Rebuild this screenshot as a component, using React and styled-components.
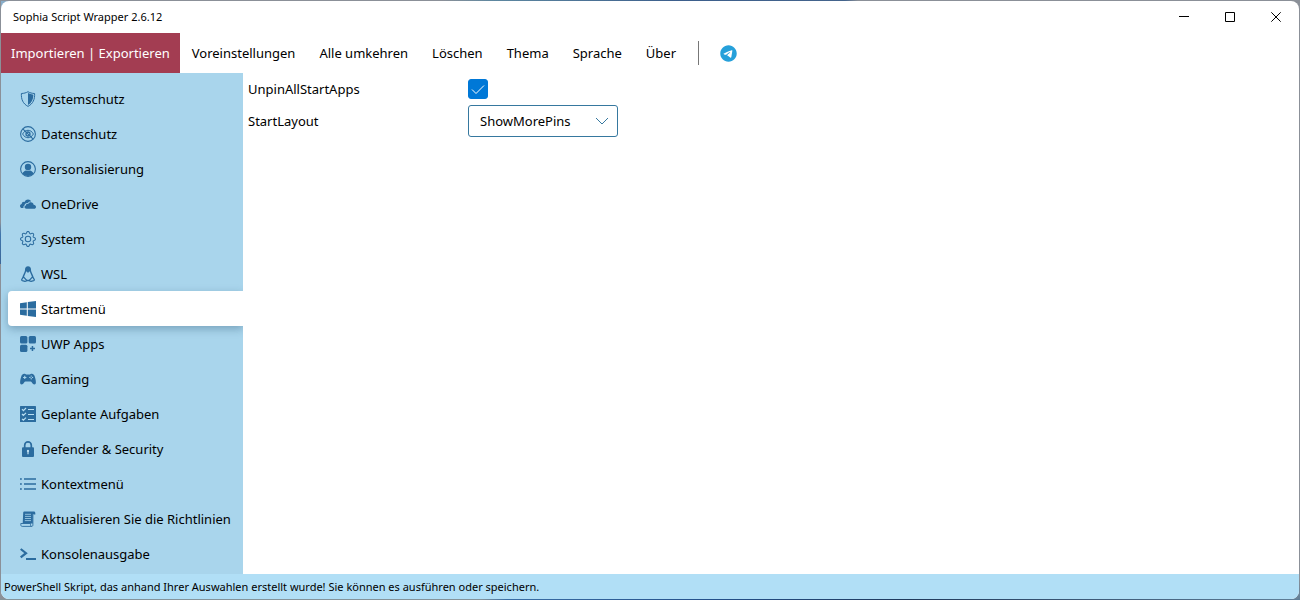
import React, { useState } from "react";
import styled, { createGlobalStyle } from "styled-components";
import { BsGear } from "react-icons/bs";
import { FaTelegram } from "react-icons/fa6";

const GlobalStyle = createGlobalStyle`
  *, *::before, *::after { box-sizing: border-box; }
  body {
    margin: 0;
    background: #8b9098;
    color: #000;
    font-family: "Noto Sans", "Open Sans", sans-serif;
    font-size: 13px;
    line-height: 20px;
  }
  button, select { font: inherit; color: inherit; }
`;

const Desktop = styled.div`
  height: 100vh;
  padding: 1px;
  background:
    linear-gradient(90deg, #8b9098 34%, #5d87a0 38%, #3c5f8c 52%, #44648c 65%, #8b9098 66%) top / 100% 1px no-repeat,
    linear-gradient(90deg, #84939a 37%, #3a6ea5 39%, #24508a 55%, #203a5c 70%, #5f7f98 100%) bottom / 100% 1px no-repeat,
    linear-gradient(#8b9098 37%, #3f76ad 39%, #3c6798 44%, #8b9098 44%) left / 1px 100% no-repeat,
    linear-gradient(135deg, #86b4d6 0, #8b9098 16px, #8b9098 calc(100% - 16px), #5f7f98 100%);
`;

const Window = styled.div`
  height: 100%;
  display: flex;
  flex-direction: column;
  background: #fff;
  border-radius: 8px;
  overflow: hidden;
`;

const TitleBar = styled.header`
  flex: none;
  height: 32px;
  display: flex;
  align-items: center;
  justify-content: space-between;
  padding-left: 12px;
`;

const Title = styled.h1`
  margin: 0;
  font-size: 11px;
  font-weight: 400;
  line-height: 16px;
`;

const WindowButtons = styled.div`
  display: flex;
`;

const WindowButton = styled.button`
  width: 46px;
  height: 32px;
  display: grid;
  place-items: center;
  padding: 0;
  border: 0;
  background: none;
  svg { width: 10px; height: 10px; fill: none; stroke: #000; }
`;

const MenuBar = styled.nav`
  flex: none;
  height: 40px;
  display: flex;
  align-items: center;
`;

const MenuButton = styled.button`
  height: 40px;
  padding: 0 ${(p) => (p.$active ? "10px" : "12px")};
  border: 0;
  white-space: nowrap;
  background: ${(p) => (p.$active ? "#a33d52" : "none")};
  color: ${(p) => (p.$active ? "#fff" : "#000")};
`;

const Divider = styled.span`
  width: 1px;
  height: 24px;
  margin: 0 21px 0 10px;
  background: #777;
`;

const TelegramLink = styled.a`
  display: flex;
  color: #26a0da;
  svg { width: 17px; height: 17px; }
`;

const Body = styled.div`
  flex: 1;
  min-height: 0;
  display: flex;
`;

const Sidebar = styled.aside`
  flex: none;
  width: 242px;
  padding: 8px 0 0 7px;
  overflow: hidden;
  background: #a9d5ec;
`;

const SideButton = styled.button`
  width: 100%;
  height: 35px;
  display: flex;
  align-items: center;
  gap: 5px;
  padding: 0 0 0 12px;
  border: 0;
  border-radius: 4px 0 0 4px;
  text-align: left;
  white-space: nowrap;
  background: ${(p) => (p.$selected ? "#fff" : "none")};
  box-shadow: ${(p) => (p.$selected ? "0 3px 8px rgba(30, 70, 100, 0.35)" : "none")};
  svg { flex: none; width: 16px; height: 16px; color: #2b6c9f; }
`;

const Content = styled.main`
  flex: 1;
  padding-left: 5px;
`;

const SettingRow = styled.div`
  height: 32px;
  display: grid;
  grid-template-columns: 220px auto;
  justify-content: start;
  align-items: center;
`;

const Overlay = styled.span`
  display: grid;
  align-items: center;
  > * { grid-area: 1 / 1; }
  > svg { pointer-events: none; fill: none; }
`;

const CheckBox = styled.input`
  appearance: none;
  width: 20px;
  height: 20px;
  margin: 0;
  border: 1px solid #0078d7;
  border-radius: 3px;
  background: #fff;
  &:checked { background: #0078d7; }
`;

const CheckMark = styled.svg`
  width: 20px;
  height: 20px;
  stroke: #fff;
`;

const Select = styled.select`
  appearance: none;
  width: 150px;
  height: 32px;
  padding: 0 32px 0 11px;
  border: 1px solid #36789f;
  border-radius: 3px;
  background: #fff;
`;

const Chevron = styled.svg`
  width: 14px;
  height: 8px;
  margin-right: 9px;
  justify-self: end;
  stroke: #36789f;
`;

const StatusBar = styled.footer`
  flex: none;
  height: 25px;
  padding: 0 3px;
  font-size: 11px;
  line-height: 25px;
  background: #b1dff6;
`;

const ShieldIcon = () => (
  <svg viewBox="0 0 16 16" fill="none" stroke="currentColor">
    <path d="M8 .7C6.200 1.800 4 2.400 1.400 2.500c-.3 5.800 1.500 10.200 6.600 12.900 5.100-2.700 6.900-7.100 6.600-12.900C12 2.400 9.800 1.800 8 .7Z" />
    <path d="M8 2c1.600.9 3.400 1.500 5.400 1.700-.1 4.700-1.700 8.100-5.400 10.400Z" fill="currentColor" stroke="none" />
  </svg>
);

const EyeOffIcon = () => (
  <svg viewBox="0 0 16 16" fill="none" stroke="currentColor">
    <circle cx="8" cy="8" r="7.400" strokeWidth="1.100" />
    <path d="M2.600 8C4 5.400 5.900 4.300 8 4.300s4 1.100 5.400 3.700C12 10.600 10.100 11.700 8 11.700S4 10.600 2.600 8Z" strokeWidth="1" />
    <circle cx="8" cy="8" r="2" strokeWidth="1.300" />
    <path d="m2.800 2.800 10.400 10.400" strokeWidth="1.100" />
  </svg>
);

const PersonIcon = () => (
  <svg viewBox="0 0 16 16" fill="currentColor">
    <circle cx="8" cy="8" r="7.400" fill="none" stroke="currentColor" strokeWidth="1.100" />
    <circle cx="8" cy="6" r="3.200" />
    <path d="M2.500 12.300c.8-1.700 2.100-2.600 3.600-2.900 1.200.6 2.600.6 3.800 0 1.500.3 2.800 1.200 3.600 2.900C12.200 14.200 10.200 15 8 15s-4.200-.8-5.500-2.700Z" />
  </svg>
);

const CloudIcon = () => (
  <svg viewBox="0 0 16 16" fill="currentColor">
    <path d="M3.600 12.100H2.300C.9 12.100 0 11.200 0 10c0-1.100.7-1.900 1.700-2.100.1-1.300 1-2.100 2.300-2.100.3 0 .5 0 .7.100C5.400 4.300 6.500 3.500 8 3.500c1.500 0 2.700.8 3.200 2.100-1.200-.2-2.500.3-3.200 1.400-2-.3-3.400.8-3.500 2.500-1 .5-1.400 1.500-.9 2.600Z" />
    <path d="M6.500 12.700c-1.200 0-2-.7-2-1.600 0-.9.6-1.500 1.400-1.600-.1-1.200.9-2 2.400-1.700.5-1 1.300-1.600 2.500-1.600 1.600 0 2.700 1.100 2.800 2.600 1.400.1 2.400.9 2.400 2.100 0 1.100-.8 1.800-2 1.800Z" />
  </svg>
);

const PenguinIcon = () => (
  <svg viewBox="0 0 16 16" fill="none" stroke="currentColor">
    <path d="M8 .3c-2 0-3 1.400-3 3.200v2l1.200-.6h3.600l1.200.6v-2C11 1.700 10 .3 8 .3Z" fill="currentColor" stroke="none" />
    <path d="M5.600 4.500c0 2.500-2.400 4.300-2.400 7.200M10.400 4.500c0 2.500 2.400 4.300 2.400 7.200M6 14.500h4" strokeWidth="1.400" />
    <path d="m6.500 5 1.500 1 1.500-1" strokeWidth="1.200" />
    <path d="M3.500 10.800 6.400 14c.3.900-.7 1.400-1.500 1.300l-2.600-.6c-.7-.2-.8-.8-.5-1.300ZM12.500 10.800 9.600 14c-.3.900.7 1.400 1.500 1.300l2.600-.6c.7-.2.8-.8.5-1.300Z" strokeWidth="1.200" />
  </svg>
);

const WindowsIcon = () => (
  <svg viewBox="0 0 16 16" fill="currentColor">
    <path d="M0 2.200 6.800 1.300v6.200H0ZM7.800 1.100 16 0v7.500H7.800ZM0 8.500h6.800v6.200L0 13.800ZM7.800 8.500H16V16l-8.200-1.100Z" />
  </svg>
);

const AppsIcon = () => (
  <svg viewBox="0 0 16 16" fill="currentColor">
    <rect width="7.400" height="7.400" rx="1.500" />
    <rect x="8.700" width="7.300" height="7.400" rx="1.500" />
    <rect y="8.700" width="7.400" height="7.300" rx="1.500" />
    <path d="M11.700 10h1.500v1.800H15v1.500h-1.800V15h-1.500v-1.700H10v-1.500h1.700Z" />
  </svg>
);

const GamepadIcon = () => (
  <svg viewBox="0 0 16 16" fill="currentColor">
    <path d="M4.100 2.700c.9-.2 1.500.2 2 .7h3.800c.5-.5 1.100-.9 2-.7 1.300.2 2.100.8 2.600 2.100.8 2.200 1.400 4.600 1.400 6.700 0 1.300-.6 2-1.500 2-1 0-1.700-1-2.700-2.300-.3-.4-.6-.6-1.100-.6H5.400c-.5 0-.8.2-1.100.6-1 1.300-1.700 2.300-2.700 2.300-.9 0-1.500-.7-1.500-2 0-2.100.6-4.500 1.400-6.700.5-1.300 1.300-1.900 2.600-2.100Z" />
    <path d="M4.200 4.800h1.100v1.100h1.100V7H5.300v1.100H4.200V7H3.100V5.900h1.100Z" fill="#a9d5ec" />
    <g fill="#a9d5ec">
      <circle cx="11.200" cy="5.100" r=".7" />
      <circle cx="11.200" cy="7.700" r=".7" />
      <circle cx="9.900" cy="6.400" r=".7" />
      <circle cx="12.500" cy="6.400" r=".7" />
    </g>
  </svg>
);

const TasksIcon = () => (
  <svg viewBox="0 0 16 16" fill="none">
    <rect width="16" height="16" rx="0.600" fill="currentColor" />
    <path d="m2 3.200 1.400 1.400L6 2M2 8l1.400 1.400L6 6.800M2 12.800l1.400 1.400L6 11.600M8 3.500h6M8 8.500h6M8 13.500h6" stroke="#b9def1" strokeWidth="1.200" />
  </svg>
);

const LockIcon = () => (
  <svg viewBox="0 0 16 16">
    <path d="M4.700 7V4.200a3.300 3.300 0 0 1 6.600 0V7" fill="none" stroke="currentColor" strokeWidth="1.700" />
    <rect x="2" y="6.200" width="12" height="9.800" rx="1" fill="currentColor" />
    <path d="M8 8.800a1.200 1.200 0 0 0-.6 2.200v2.300h1.200V11A1.200 1.200 0 0 0 8 8.800Z" fill="#c6e5f5" />
  </svg>
);

const ListIcon = () => (
  <svg viewBox="0 0 16 16" fill="none" stroke="currentColor" strokeWidth="1.600">
    <path d="M0 3h1.800M0 8h1.800M0 13h1.800M4 3h12M4 8h12M4 13h12" />
  </svg>
);

const ScrollIcon = () => (
  <svg viewBox="0 0 16 16" fill="none" stroke="currentColor">
    <path d="M3.200 1.800C3.200 1 3.800.5 4.500.5h9.200c1.100 0 1.600.7 1.600 1.500v1.600h-2.500v9H2.700Z" fill="currentColor" stroke="none" />
    <path d="M5 3.300h6M5 5.400h6M4.900 7.500H11M4.800 9.600H11" stroke="#a9d5ec" strokeWidth=".8" />
    <path d="M.8 12.500h9.700v1.200c0 1 .5 1.700 1.200 1.700H2.200c-.9 0-1.400-.7-1.400-1.600ZM11.700 15.400c.8 0 1.200-.6 1.200-1.600V4" strokeWidth=".9" />
  </svg>
);

const ConsoleIcon = () => (
  <svg viewBox="0 0 16 16" fill="none" stroke="currentColor">
    <path d="m.7 3 5.300 4.200-5.300 4.200" strokeWidth="2.200" />
    <path d="M6 13h10" strokeWidth="2" />
  </svg>
);

const menuItems = ["Importieren | Exportieren", "Voreinstellungen", "Alle umkehren", "Löschen", "Thema", "Sprache", "Über"];

const categories = [
  ["Systemschutz", ShieldIcon],
  ["Datenschutz", EyeOffIcon],
  ["Personalisierung", PersonIcon],
  ["OneDrive", CloudIcon],
  ["System", BsGear],
  ["WSL", PenguinIcon],
  ["Startmenü", WindowsIcon],
  ["UWP Apps", AppsIcon],
  ["Gaming", GamepadIcon],
  ["Geplante Aufgaben", TasksIcon],
  ["Defender & Security", LockIcon],
  ["Kontextmenü", ListIcon],
  ["Aktualisieren Sie die Richtlinien", ScrollIcon],
  ["Konsolenausgabe", ConsoleIcon],
];

export default function App() {
  const [selected, setSelected] = useState("Startmenü");
  const [unpin, setUnpin] = useState(true);

  return (
    <Desktop>
      <GlobalStyle />
      <Window>
        <TitleBar>
          <Title>Sophia Script Wrapper 2.6.12</Title>
          <WindowButtons>
            <WindowButton aria-label="Minimieren">
              <svg viewBox="0 0 10 10"><path d="M0 4.500h10" /></svg>
            </WindowButton>
            <WindowButton aria-label="Maximieren">
              <svg viewBox="0 0 10 10"><path d="M.5.5h9v9h-9Z" /></svg>
            </WindowButton>
            <WindowButton aria-label="Schließen">
              <svg viewBox="0 0 10 10"><path d="m.3.3 9.400 9.400m0-9.400L.3 9.700" /></svg>
            </WindowButton>
          </WindowButtons>
        </TitleBar>
        <MenuBar>
          {menuItems.map((item, i) => (
            <MenuButton key={item} $active={i === 0}>{item}</MenuButton>
          ))}
          <Divider />
          <TelegramLink href="#telegram" aria-label="Telegram"><FaTelegram /></TelegramLink>
        </MenuBar>
        <Body>
          <Sidebar>
            {categories.map(([name, Icon]) => (
              <SideButton key={name} $selected={name === selected} onClick={() => setSelected(name)}>
                <Icon />
                {name}
              </SideButton>
            ))}
          </Sidebar>
          <Content>
            <SettingRow>
              <label htmlFor="unpin">UnpinAllStartApps</label>
              <Overlay>
                <CheckBox id="unpin" type="checkbox" checked={unpin} onChange={(e) => setUnpin(e.target.checked)} />
                <CheckMark viewBox="0 0 20 20"><path d="m4 10.500 4 4 8-8" /></CheckMark>
              </Overlay>
            </SettingRow>
            <SettingRow>
              <label htmlFor="layout">StartLayout</label>
              <Overlay>
                <Select id="layout" defaultValue="ShowMorePins">
                  <option>ShowMorePins</option>
                  <option>Default</option>
                  <option>ShowMoreRecommendations</option>
                </Select>
                <Chevron viewBox="0 0 14 8"><path d="m1 1 6 6 6-6" /></Chevron>
              </Overlay>
            </SettingRow>
          </Content>
        </Body>
        <StatusBar>PowerShell Skript, das anhand Ihrer Auswahlen erstellt wurde! Sie können es ausführen oder speichern.</StatusBar>
      </Window>
    </Desktop>
  );
}
